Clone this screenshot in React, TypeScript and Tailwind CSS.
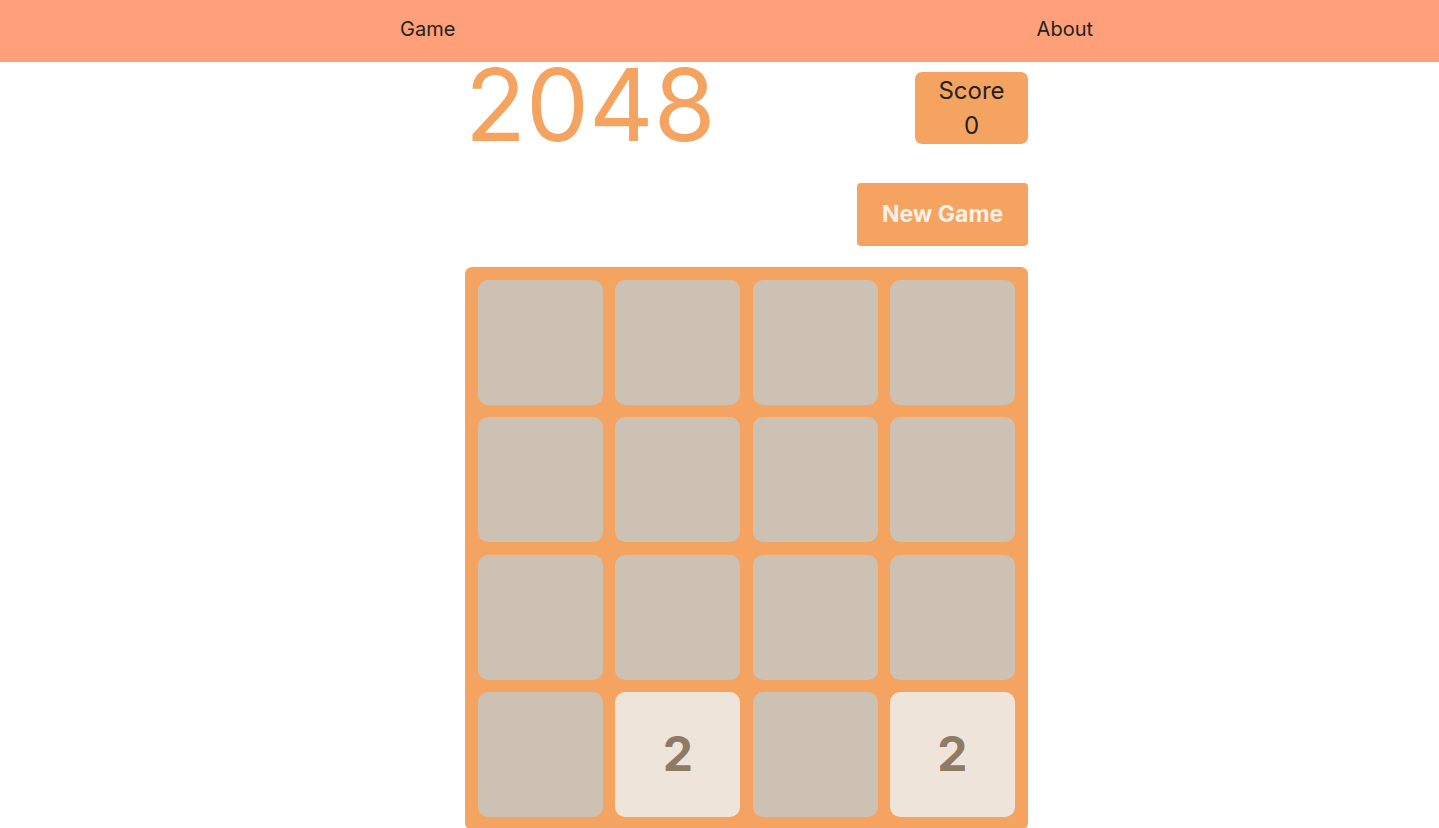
const board = [
  [0, 0, 0, 0],
  [0, 0, 0, 0],
  [0, 0, 0, 0],
  [0, 2, 0, 2],
];

function Tile({ value }: { value: number }) {
  if (!value) {
    return <div className="h-[125px] w-[125px] rounded-[10px] bg-[#cdc1b4]" />;
  }
  return (
    <div className="flex h-[125px] w-[125px] items-center justify-center rounded-[10px] bg-[#eee4da] text-[48px] font-bold text-[#8f7a66]">
      {value}
    </div>
  );
}

export default function App() {
  return (
    <div className="min-h-screen bg-white font-['Inter',sans-serif] text-[#222]">
      {/* NAV */}
      <header className="h-[62px] bg-[#ffa07a]">
        <nav className="ml-[400px] flex h-full w-[693px] items-center justify-between pb-[5px] text-[20px]">
          <a href="#">Game</a>
          <a href="#">About</a>
        </nav>
      </header>

      <main className="ml-[465px] w-[563px]">
        {/* TITLE + SCORE */}
        <div className="flex h-[100px] items-start justify-between">
          <h1 className="text-[100px] font-normal leading-[86px] text-[#f4a460]">2048</h1>
          <div className="mt-[10px] flex h-[72px] w-[113px] flex-col items-center justify-center rounded-[7px] bg-[#f4a460] text-[24px] leading-[35px]">
            <span>Score</span>
            <span>0</span>
          </div>
        </div>

        {/* ACTIONS */}
        <div className="mt-[21px] flex justify-end">
          <button className="h-[63px] w-[171px] rounded-[4px] bg-[#f4a460] text-[23px] font-bold text-[#fff0e6]">
            New Game
          </button>
        </div>

        {/* BOARD */}
        <div className="mt-[21px] grid grid-cols-4 gap-[12.3px] rounded-[7px] bg-[#f4a460] p-[13px]">
          {board.flat().map((v, i) => (
            <Tile key={i} value={v} />
          ))}
        </div>
      </main>
    </div>
  );
}
